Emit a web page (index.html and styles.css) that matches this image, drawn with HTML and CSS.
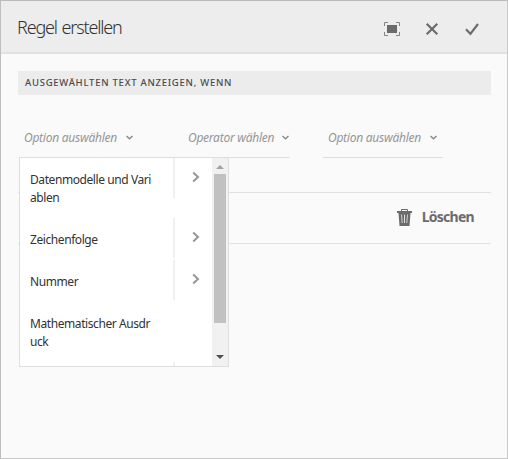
FILE: index.html
```html
<!DOCTYPE html>
<html lang="de">
<head>
<meta charset="utf-8">
<title>Regel erstellen</title>
<link rel="stylesheet" href="styles.css">
</head>
<body>
<main class="dialog">
  <header class="header">
    <h1 class="title">Regel erstellen</h1>
    <div class="actions">
      <svg class="icon" width="18" height="16" viewBox="0 0 18 16"><path d="M4 4h10v8H4z" fill="#6b6b6b"/><path d="M1.500 5V1.500H5M13 1.500h3.500V5M16.500 11v3.500H13M5 14.500H1.500V11" fill="none" stroke="#858585"/></svg>
      <svg class="icon" width="14" height="14" viewBox="0 0 14 14"><path d="M1.700 1.700l10.600 10.600M12.300 1.700L1.700 12.300" fill="none" stroke="#6b6b6b" stroke-width="2.200"/></svg>
      <svg class="icon" width="14" height="14" viewBox="0 0 14 14"><path d="M1 7.300l4.400 4.600L13 2" fill="none" stroke="#6b6b6b" stroke-width="2.200"/></svg>
    </div>
  </header>
  <section class="content">
    <h2 class="band"><span class="band-text">Ausgewählten Text anzeigen, wenn</span></h2>
    <div class="condition">
      <div class="select select-first"><span class="label">Option auswählen</span><svg class="caret" width="7" height="5" viewBox="0 0 7 5"><path d="M.5 1l3 2.700 3-2.700"/></svg>
        <div class="menu">
          <ul class="list">
            <li class="item"><span class="item-text">Datenmodelle und Vari<br>ablen</span><span class="sub"><svg class="chevron" width="8" height="12" viewBox="0 0 8 12"><path d="M1.200 1.500L6 6l-4.800 4.500"/></svg></span></li>
            <li class="item"><span class="item-text">Zeichenfolge</span><span class="sub"><svg class="chevron" width="8" height="12" viewBox="0 0 8 12"><path d="M1.200 1.500L6 6l-4.800 4.500"/></svg></span></li>
            <li class="item"><span class="item-text">Nummer</span><span class="sub"><svg class="chevron" width="8" height="12" viewBox="0 0 8 12"><path d="M1.200 1.500L6 6l-4.800 4.500"/></svg></span></li>
            <li class="item"><span class="item-text">Mathematischer Ausdr<br>uck</span></li>
            <li class="item"><span class="item-text"></span><span class="sub"></span></li>
          </ul>
          <div class="scrollbar">
            <svg width="8" height="4" viewBox="0 0 8 4"><path d="M0 4l4-4 4 4z" fill="#a3a3a3"/></svg>
            <div class="thumb"></div>
            <svg width="8" height="4" viewBox="0 0 8 4"><path d="M0 0h8L4 4z" fill="#505050"/></svg>
          </div>
        </div>
      </div>
      <div class="select select-operator"><span class="label">Operator wählen</span><svg class="caret" width="7" height="5" viewBox="0 0 7 5"><path d="M.5 1l3 2.700 3-2.700"/></svg></div>
      <div class="select select-last"><span class="label">Option auswählen</span><svg class="caret" width="7" height="5" viewBox="0 0 7 5"><path d="M.5 1l3 2.700 3-2.700"/></svg></div>
    </div>
    <div class="footer">
      <svg width="16" height="18" viewBox="0 0 16 18"><path d="M4.500 3V1.500h6V3" fill="none" stroke="#6b6b6b"/><path fill="#6b6b6b" fill-rule="evenodd" d="M0 3h15v2H0zM1.500 5h12l-1 13h-10zM4.300 6.500l.5 8.500h.7L5 6.500zM7.100 6.500V15h.8V6.500zM10 6.500L9.500 15h.7l.5-8.500z"/></svg>
      <span class="delete">Löschen</span>
    </div>
  </section>
</main>
</body>
</html>
```
FILE: styles.css
```css
* { box-sizing: border-box; }
body { margin: 0; font-family: "Noto Sans", "Open Sans", sans-serif; color: #323232; }
.dialog { width: 508px; height: 459px; border: 1px solid #c8c8c8; border-top-color: #bcbcbc; border-left-color: #bebebe; background: #fafafa; }
.header { height: 53px; display: flex; align-items: center; justify-content: space-between; padding: 1px 28px 0 16px; background: #ededed; border-bottom: 2px solid #e2e2e2; }
.title { margin: 0; font-size: 18px; line-height: 24px; font-weight: 350; letter-spacing: -1.15px; word-spacing: 1px; white-space: nowrap; }
.actions { display: flex; align-items: center; gap: 26px; padding-top: 4px; }
.actions .icon:first-child { margin-right: -2px; }
.content { padding: 17px 16px 0 17px; }
.band { margin: 0; height: 24px; padding: 0 0 1px 7px; display: flex; align-items: center; background: #ececec; font-size: 9.500px; font-weight: 500; color: #4b4b4b; text-transform: uppercase; letter-spacing: .74px; white-space: nowrap; }
.condition { height: 98px; display: flex; align-items: flex-start; padding: 24px 0 0 1px; border-bottom: 1px solid #e1e1e1; }
.select { position: relative; height: 39px; display: flex; align-items: center; justify-content: space-between; border-bottom: 1px solid #dedede; }
.select-first { width: 120px; padding: 0 6px 0 5px; border-color: #c4c4c4; }
.select-operator { width: 102px; margin-left: 49px; padding-right: 1px; }
.select-last { width: 120px; margin-left: 33px; padding: 0 6px 0 5px; }
.label { font-size: 12px; line-height: 18px; font-style: italic; color: #969696; letter-spacing: -.25px; white-space: nowrap; }
.caret { fill: none; stroke: #8c8c8c; stroke-width: 1.5; margin-top: -2px; }
.menu { position: absolute; left: 0; top: 38px; width: 210px; height: 210px; display: flex; background: #fff; border: 1px solid #dedede; z-index: 1; }
.list { flex: 1; margin: 0; padding: 0; list-style: none; overflow: hidden; }
.item { display: flex; padding-bottom: 2px; min-height: 42px; }
.item-text { width: 153px; padding: 13px 0 9px 10px; font-size: 12px; line-height: 18px; letter-spacing: -.42px; white-space: nowrap; }
.sub { flex: 1; height: 40px; display: flex; align-items: center; padding: 0 0 2px 17px; border-left: 2px solid #f0f0f0; }
.chevron { fill: none; stroke: #969696; stroke-width: 2; }
.scrollbar { width: 16px; display: flex; flex-direction: column; align-items: center; padding: 7px 0; background: #f1f1f1; }
.thumb { width: 12px; height: 149px; margin: 5px 0 auto; background: #c1c1c1; }
.footer { height: 51px; display: flex; align-items: center; justify-content: flex-end; gap: 9px; padding: 0 17px 2px 0; border-bottom: 1px solid #e1e1e1; }
.delete { font-size: 14px; line-height: 20px; font-weight: 700; color: #6b6b6b; letter-spacing: -.72px; }
```
